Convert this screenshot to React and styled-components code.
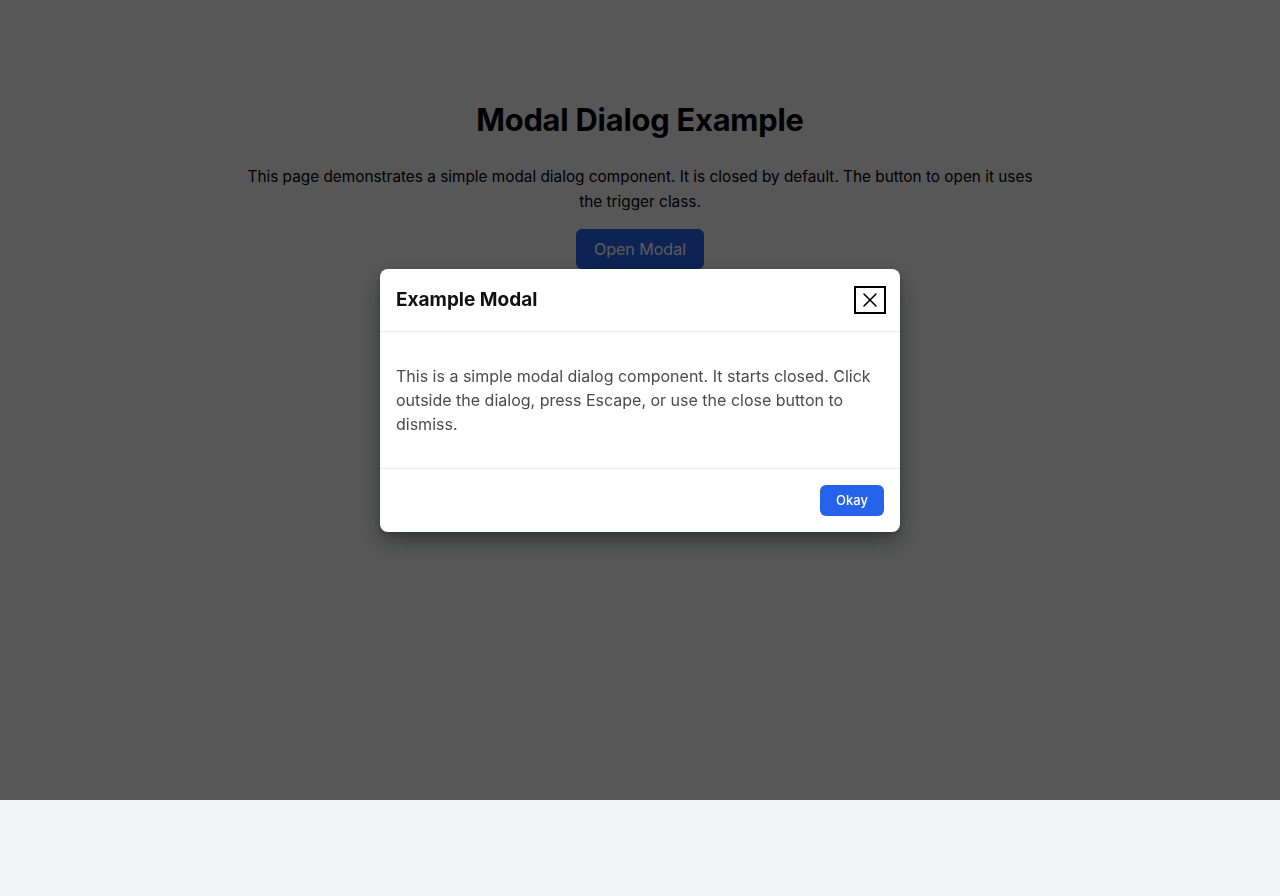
import React from "react";
import styled, { createGlobalStyle } from "styled-components";

const GlobalStyle = createGlobalStyle`
  * { box-sizing: border-box; }
  body {
    margin: 0;
    background: #f3f4f6;
    font-family: Inter, "Noto Sans", "Liberation Sans", sans-serif;
    color: #111;
  }
`;

const Page = styled.main`
  min-height: 896px;
  padding: 101px 24px 0;
  display: flex;
  flex-direction: column;
  align-items: center;
  text-align: center;
`;

const Title = styled.h1`
  margin: 0 0 25px;
  font-size: 30.8px;
  line-height: 38px;
  font-weight: 700;
  letter-spacing: -0.2px;
  color: #000;
`;

const Intro = styled.p`
  margin: 0 0 15px;
  max-width: 800px;
  font-size: 15.35px;
  line-height: 25px;
  color: #000;
`;

const Button = styled.button`
  border: none;
  border-radius: 6px;
  background: #2563eb;
  color: #fff;
  font-family: inherit;
  cursor: pointer;
  height: ${(p) => (p.$small ? "31px" : "40px")};
  padding: ${(p) => (p.$small ? "0 16px" : "0 18px")};
  font-size: ${(p) => (p.$small ? "13px" : "16px")};
  font-weight: ${(p) => (p.$small ? 500 : 400)};
`;

const Overlay = styled.div`
  position: fixed;
  left: 0;
  top: 0;
  width: 100%;
  height: 800px;
  background: rgba(0, 0, 0, 0.645);
  display: flex;
  align-items: center;
  justify-content: center;
`;

const Dialog = styled.div`
  width: 520px;
  background: #fff;
  border-radius: 8px;
  box-shadow: 0 10px 25px rgba(0, 0, 0, 0.35), 0 4px 8px rgba(0, 0, 0, 0.15);
  overflow: hidden;
`;

const Header = styled.header`
  height: 63px;
  padding: 0 14px 0 16px;
  display: flex;
  align-items: center;
  justify-content: space-between;
  border-bottom: 1px solid #e9e9ec;
`;

const DialogTitle = styled.h2`
  margin: 0;
  font-size: 19px;
  font-weight: 700;
  color: #111;
`;

const CloseButton = styled.button`
  width: 32px;
  height: 28px;
  padding: 0;
  display: flex;
  align-items: center;
  justify-content: center;
  background: #fff;
  border: 2px solid #000;
  border-radius: 0;
  cursor: pointer;
`;

const Body = styled.div`
  padding: 32px 16px;
  border-bottom: 1px solid #e9e9ec;
`;

const BodyText = styled.p`
  margin: 0;
  text-align: left;
  font-size: 16px;
  line-height: 24px;
  color: #4b4b4b;
`;

const Footer = styled.footer`
  padding: 16px;
  display: flex;
  justify-content: flex-end;
`;

export default function App() {
  return (
    <>
      <GlobalStyle />
      <Page>
        <Title>Modal Dialog Example</Title>
        <Intro>
          This page demonstrates a simple modal dialog component. It is closed
          by default. The button to open it uses the trigger class.
        </Intro>
        <Button className="trigger">Open Modal</Button>
      </Page>
      <Overlay>
        <Dialog role="dialog" aria-modal="true" aria-labelledby="modal-title">
          <Header>
            <DialogTitle id="modal-title">Example Modal</DialogTitle>
            <CloseButton aria-label="Close">
              <svg width="16" height="16" viewBox="0 0 16 16" fill="none">
                <path
                  d="M2 2L14 14M14 2L2 14"
                  stroke="#000"
                  strokeWidth="1.6"
                  strokeLinecap="round"
                />
              </svg>
            </CloseButton>
          </Header>
          <Body>
            <BodyText>
              This is a simple modal dialog component. It starts closed. Click
              outside the dialog, press Escape, or use the close button to
              dismiss.
            </BodyText>
          </Body>
          <Footer>
            <Button $small>Okay</Button>
          </Footer>
        </Dialog>
      </Overlay>
    </>
  );
}
